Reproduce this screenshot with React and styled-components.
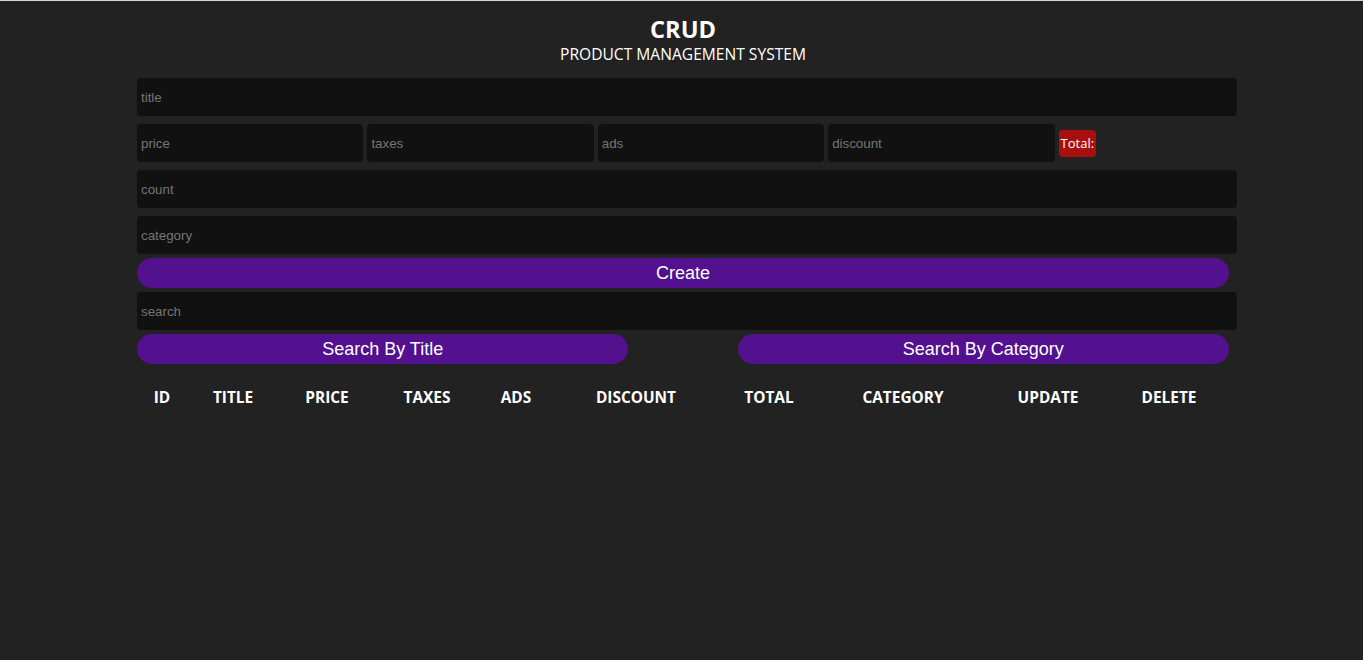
import React from "react";
import styled, { createGlobalStyle } from "styled-components";

const GlobalStyle = createGlobalStyle`
  html, body {
    margin: 0;
    padding: 0;
  }
  body {
    background-color: #222222;
    color: white;
    border-top: 1px solid #d4d4d4;
    min-height: 659px;
    font-family: "Open Sans", "Noto Sans", sans-serif;
  }
`;

const Crud = styled.div`
  width: 1092px;
  margin-left: 137px;
`;

const Head = styled.div`
  text-align: center;
  padding-top: 13px;
`;

const Title = styled.h2`
  margin: 0;
  font-size: 23.6px;
  font-weight: 700;
  line-height: 30px;
`;

const SubTitle = styled.p`
  margin: 0;
  font-size: 15.6px;
  line-height: 20px;
`;

const Inputs = styled.div`
  display: flex;
  flex-direction: column;
  margin-top: 10px;
`;

const Input = styled.input`
  width: ${(p) => p.$w || "100%"};
  height: 30px;
  padding: 4px;
  margin: 4px 0;
  border: none;
  outline: none;
  border-radius: 4px;
  background-color: #111111;
  color: white;
  font-family: "Liberation Sans", Arial, sans-serif;
  font-size: 13.33px;
  box-sizing: content-box;
  display: block;
  &::placeholder {
    color: #757575;
  }
`;

const PriceRow = styled.div`
  display: flex;
  align-items: center;
  gap: 4px;
  ${Input} {
    flex: none;
  }
`;

const Total = styled.small`
  background-color: #a80f0f;
  color: white;
  border-radius: 4px;
  padding: 0 2px;
  height: 27px;
  line-height: 27px;
  font-size: 13px;
  font-family: "Open Sans", sans-serif;
`;

const Button = styled.button`
  width: ${(p) => p.$w || "100%"};
  height: 30px;
  border: none;
  border-radius: 15px;
  background-color: #53108f;
  color: white;
  font-family: "Liberation Sans", Arial, sans-serif;
  font-size: 18px;
  cursor: pointer;
  display: block;
`;

const SearchBlock = styled.div`
  display: flex;
  flex-direction: column;
`;

const SearchButtons = styled.div`
  display: flex;
  justify-content: space-between;
`;

const Table = styled.table`
  width: 100%;
  margin-top: 13px;
  border-collapse: collapse;
  text-align: center;
`;

const Th = styled.th`
  width: ${(p) => p.$w}px;
  padding: 10px 0;
  font-size: 15.4px;
  font-weight: 700;
  text-transform: uppercase;
`;

const columns = [
  ["id", 50],
  ["title", 92],
  ["price", 96],
  ["taxes", 104],
  ["ads", 74],
  ["discount", 166],
  ["total", 100],
  ["category", 168],
  ["update", 122],
  ["delete", 120],
];

const App = () => {
  return (
    <>
      <GlobalStyle />
      <Crud>
        <Head>
          <Title>CRUD</Title>
          <SubTitle>PRODUCT MANAGEMENT SYSTEM</SubTitle>
        </Head>

        <Inputs>
          <Input type="text" placeholder="title" />
          <PriceRow>
            <Input $w="20%" type="number" placeholder="price" />
            <Input $w="20%" type="number" placeholder="taxes" />
            <Input $w="20%" type="number" placeholder="ads" />
            <Input $w="20%" type="number" placeholder="discount" />
            <Total>Total:</Total>
          </PriceRow>
          <Input type="number" placeholder="count" />
          <Input type="text" placeholder="category" />
          <Button>Create</Button>
        </Inputs>

        <SearchBlock>
          <Input type="text" placeholder="search" />
          <SearchButtons>
            <Button $w="45%">Search By Title</Button>
            <Button $w="45%">Search By Category</Button>
          </SearchButtons>
        </SearchBlock>

        <Table>
          <thead>
            <tr>
              {columns.map(([name, w]) => (
                <Th key={name} $w={w}>
                  {name}
                </Th>
              ))}
            </tr>
          </thead>
          <tbody></tbody>
        </Table>
      </Crud>
    </>
  );
};

export default App;
